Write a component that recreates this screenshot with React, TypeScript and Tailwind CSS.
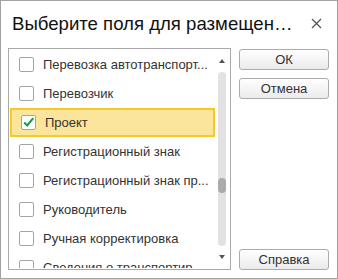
import React from "react";

const rows = [
  { label: "Перевозка автотранспорт...", checked: false },
  { label: "Перевозчик", checked: false },
  { label: "Проект", checked: true },
  { label: "Регистрационный знак", checked: false },
  { label: "Регистрационный знак пр...", checked: false },
  { label: "Руководитель", checked: false },
  { label: "Ручная корректировка", checked: false },
  { label: "Сведения о транспортир", checked: false },
];

function CheckBox({ checked }: { checked: boolean }) {
  return (
    <div className="w-[15px] h-[15px] shrink-0 border border-[#a5a5a5] rounded-[2px] bg-white flex items-center justify-center">
      {checked && (
        <svg width="15" height="15" viewBox="0 0 15 15">
          <path d="M2.5 7.5 L6 11 L13 2.5" fill="none" stroke="#1e9a46" strokeWidth="2.4" />
        </svg>
      )}
    </div>
  );
}

function Row({ label, checked }: { label: string; checked: boolean }) {
  return (
    <div
      className={
        "h-[29px] shrink-0 flex items-center gap-[9px] pl-[9px] " +
        (checked ? "bg-[#fbe59b] border-2 border-[#f5c92c] pl-[7px]" : "")
      }
    >
      <CheckBox checked={checked} />
      <span className="whitespace-nowrap text-[13px] text-[#333]">{label}</span>
    </div>
  );
}

function Button({ title }: { title: string }) {
  return (
    <div className="h-[21px] w-[90px] border border-[#ababab] rounded-[3px] bg-gradient-to-b from-white to-[#ebebeb] flex items-center justify-center text-[13px] text-[#333]">
      {title}
    </div>
  );
}

export default function App() {
  return (
    <div
      className="w-[338px] h-[279px] border border-[#a3a3a3] bg-white flex flex-col"
      style={{ fontFamily: '"Liberation Sans", Arial, sans-serif' }}
    >
      <div className="h-[47px] shrink-0 flex items-center justify-between pl-[11px] pr-[15px] pb-[2px]">
        <span className="whitespace-nowrap text-[18.6px] text-[#111]">Выберите поля для размещен…</span>
        <svg width="11" height="11" viewBox="0 0 11 11">
          <path d="M1 1 L10 10 M10 1 L1 10" stroke="#555" strokeWidth="1.3" />
        </svg>
      </div>
      <div className="flex gap-[8px] pl-[7px] pr-[8px]">
        <div className="w-[223px] h-[222px] border border-[#a9a9a9] p-[1px] flex">
          <div className="flex-1 flex flex-col overflow-hidden">
            {rows.map((r) => (
              <Row key={r.label} label={r.label} checked={r.checked} />
            ))}
          </div>
          <div className="w-[14px] flex flex-col items-center">
            <div className="h-[22px] flex items-center justify-center">
              <div className="w-0 h-0 border-l-[3px] border-r-[3px] border-b-[4px] border-l-transparent border-r-transparent border-b-[#555]" />
            </div>
            <div className="flex-1 w-[8px] rounded-[4px] bg-[#e2e2e2]">
              <div className="mt-[106px] h-[15px] rounded-[4px] bg-[#ababab]" />
            </div>
            <div className="h-[22px] flex items-center justify-center">
              <div className="w-0 h-0 border-l-[3px] border-r-[3px] border-t-[4px] border-l-transparent border-r-transparent border-t-[#555]" />
            </div>
          </div>
        </div>
        <div className="w-[90px] flex flex-col pt-[1px]">
          <div className="flex flex-col gap-[8px]">
            <Button title="ОК" />
            <Button title="Отмена" />
          </div>
          <div className="mt-auto">
            <Button title="Справка" />
          </div>
        </div>
      </div>
    </div>
  );
}
